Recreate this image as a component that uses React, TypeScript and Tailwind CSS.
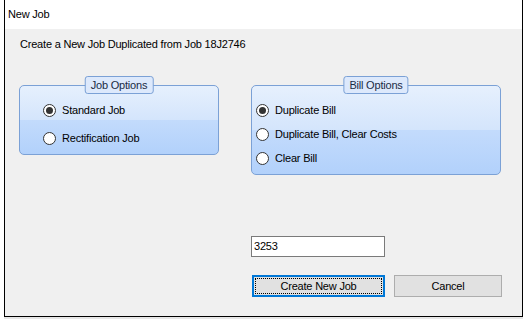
import { ReactNode } from "react";

const font = { fontFamily: '"Liberation Sans", Arial, sans-serif' };

const Radio = ({ checked, label }: { checked?: boolean; label: string }) => (
  <div className="flex items-center gap-[6px] h-[16px]">
    <span className="w-[13px] h-[13px] rounded-full border border-[#333] bg-white flex items-center justify-center shrink-0">
      {checked && <span className="w-[7px] h-[7px] rounded-full bg-[#333]" />}
    </span>
    <span className="text-[11px] tracking-[-0.2px] text-black leading-none">{label}</span>
  </div>
);

const GroupBox = ({
  title,
  className,
  children,
}: {
  title: string;
  className: string;
  children: ReactNode;
}) => (
  <div
    className={`relative rounded-[5px] border border-[#7ba1d6] bg-[linear-gradient(to_bottom,#e6f0fd_0%,#d4e5fc_50%,#c3dbfc_50%,#b2d1fb_100%)] ${className}`}
  >
    {/* legend sits on the top border */}
    <div className="absolute left-1/2 -translate-x-1/2 -top-[10px] h-[18px] px-[5px] rounded-[3px] border border-[#7ba1d6] bg-[#dde9fc] flex items-center">
      <span className="text-[11px] tracking-[-0.2px] text-[#1a2b45] leading-none whitespace-nowrap">{title}</span>
    </div>
    {children}
  </div>
);

export default function App() {
  return (
    <div className="w-[527px] h-[322px] bg-white overflow-hidden" style={font}>
      <div className="ml-[4px] w-[519px] h-[317px] border-l border-r border-b border-black flex flex-col shadow-[0_2px_0_#e6e6e6]">
        {/* Title bar */}
        <div className="h-[29px] bg-white flex items-center pl-[3px] shrink-0">
          <span className="text-[11px] tracking-[-0.2px] text-black">New Job</span>
        </div>

        {/* Body */}
        <div className="flex-1 bg-[#f0f0f0] flex flex-col pt-[8px]">
          <div className="ml-[15px] h-[15px] flex items-center text-[11px] tracking-[-0.2px] text-black">
            Create a New Job Duplicated from Job 18J2746
          </div>

          <div className="flex items-start mt-[33px] ml-[14px]">
            <GroupBox title="Job Options" className="w-[200px] h-[70px]">
              <div className="flex flex-col gap-[12px] pl-[23px] pt-[16px]">
                <Radio checked label="Standard Job" />
                <Radio label="Rectification Job" />
              </div>
            </GroupBox>

            <GroupBox title="Bill Options" className="ml-[32px] w-[250px] h-[90px]">
              <div className="flex flex-col gap-[8px] pl-[4px] pt-[16px]">
                <Radio checked label="Duplicate Bill" />
                <Radio label="Duplicate Bill, Clear Costs" />
                <Radio label="Clear Bill" />
              </div>
            </GroupBox>
          </div>

          <div className="ml-[246px] mt-[61px] flex flex-col">
            <div className="w-[134px] h-[21px] border border-[#7a7a7a] bg-white flex items-center pl-[2px]">
              <span className="text-[11px] tracking-[-0.2px] text-black">3253</span>
            </div>

            <div className="flex gap-[9px] mt-[18px] ml-[1px]">
              <button className="w-[133px] h-[22px] border-2 border-[#0078d7] bg-[#e1e1e1] p-[1px] flex">
                <span className="flex-1 border border-dotted border-black flex items-center justify-center text-[11px] tracking-[-0.2px] text-black">
                  Create New Job
                </span>
              </button>
              <button className="w-[108px] h-[22px] border border-[#adadad] bg-[#e1e1e1] flex items-center justify-center text-[11px] tracking-[-0.2px] text-black">
                Cancel
              </button>
            </div>
          </div>
        </div>
      </div>
    </div>
  );
}
